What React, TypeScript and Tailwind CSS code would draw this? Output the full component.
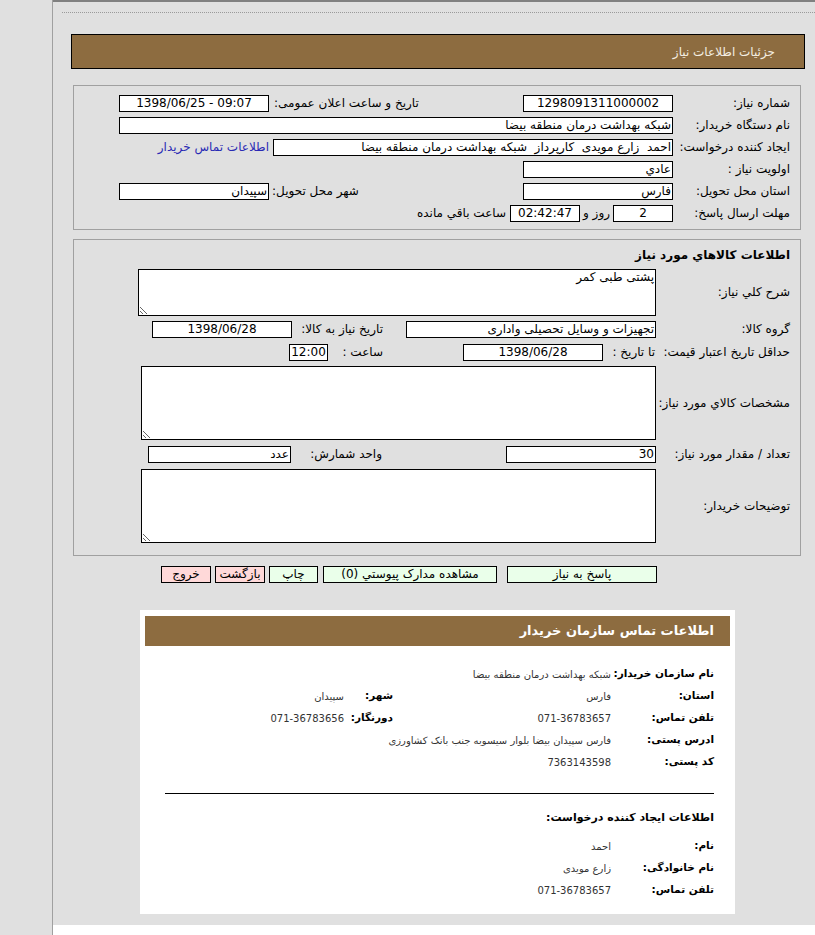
import React from "react";

const FONT = { fontFamily: '"DejaVu Sans", sans-serif' };

function Box({ className = "", children, ltr = false }: { className?: string; children?: React.ReactNode; ltr?: boolean }) {
  return (
    <div
      dir={ltr ? "ltr" : "rtl"}
      className={`h-[17px] shrink-0 border border-black bg-white px-[1px] text-[12px] leading-[15px] whitespace-nowrap overflow-hidden text-black ${className}`}
    >
      {children}
    </div>
  );
}

function Area({ className = "", value = "" }: { className?: string; value?: string }) {
  return (
    <textarea
      readOnly
      dir="rtl"
      value={value}
      className={`block shrink-0 resize border border-black bg-white px-[1px] py-0 text-[12px] leading-[15px] text-black outline-none ${className}`}
      style={FONT}
    />
  );
}

function Lbl({ className = "", children }: { className?: string; children?: React.ReactNode }) {
  return <div className={`shrink-0 whitespace-nowrap text-[12px] leading-[17px] text-black ${className}`}>{children}</div>;
}

function Btn({ className = "", children }: { className?: string; children?: React.ReactNode }) {
  return (
    <div className={`h-[17px] shrink-0 border border-black text-center text-[12px] leading-[15px] text-black ${className}`}>
      {children}
    </div>
  );
}

function CardRow({ children }: { children: React.ReactNode }) {
  return <div className="flex h-[22px] items-center whitespace-nowrap">{children}</div>;
}

function CL({ className = "w-[103px]", children }: { className?: string; children: React.ReactNode }) {
  return <div className={`shrink-0 text-[10.5px] font-bold text-black ${className}`}>{children}</div>;
}

export default function App() {
  return (
    <div className="flex min-h-[935px] w-[815px] bg-[#e0e0e0]" dir="ltr" style={FONT}>
      <div className="w-[52px] shrink-0 bg-[#e0e0e0]" />
      <div className="w-[1px] shrink-0 bg-[#a0a0a0]" />
      <div className="flex w-[762px] flex-col">
        <div className="h-[925px] border-t-2 border-[#808080] bg-[#e0e0e0]" dir="rtl">
          <div className="ml-[9px] mt-[10px] border-t border-dotted border-[#9a9a9a]" />
          {/* header */}
          <div className="ml-[18px] mr-[10px] mt-[21px] flex h-[35px] items-center border border-black bg-[#8d6c40] pr-[29px] text-[12px] text-[#f4eee2]">
            جزئیات اطلاعات نیاز
          </div>

          {/* panel 1 */}
          <div className="ml-[20px] mr-[14px] mt-[16px] border border-[#a0a0a0] pb-[2px] pt-[9px]">
            <div className="flex h-[22px] items-start">
              <Lbl className="w-[127px] pr-[10px]">شماره نیاز:</Lbl>
              <Box className="w-[150px] text-center">1298091311000002</Box>
              <div className="flex flex-1 justify-end pl-[45px]">
                <Lbl className="ml-[5px]">تاریخ و ساعت اعلان عمومی:</Lbl>
                <Box ltr className="w-[150px] text-center">1398/06/25 - 09:07</Box>
              </div>
            </div>
            <div className="flex h-[22px] items-start">
              <Lbl className="w-[127px] pr-[10px]">نام دستگاه خریدار:</Lbl>
              <Box className="w-[554px] text-right">شبکه بهداشت درمان منطقه بیضا</Box>
            </div>
            <div className="flex h-[22px] items-start">
              <Lbl className="w-[127px] pr-[10px]">ایجاد کننده درخواست:</Lbl>
              <Box className="w-[400px] text-right">احمد&nbsp; زارع مویدی&nbsp; کارپرداز&nbsp; شبکه بهداشت درمان منطقه بیضا</Box>
              <div className="mr-[4px] shrink-0 whitespace-nowrap text-[12px] leading-[17px] text-[#2a2ab4]">اطلاعات تماس خریدار</div>
            </div>
            <div className="flex h-[22px] items-start">
              <Lbl className="w-[127px] pr-[10px]">اولویت نیاز :</Lbl>
              <Box className="w-[150px] text-right">عادي</Box>
            </div>
            <div className="flex h-[22px] items-start">
              <Lbl className="w-[127px] pr-[10px]">استان محل تحویل:</Lbl>
              <Box className="w-[150px] text-right">فارس</Box>
              <div className="flex flex-1 justify-end pl-[45px]">
                <Lbl className="ml-[3px]">شهر محل تحویل:</Lbl>
                <Box className="w-[150px] text-right">سپیدان</Box>
              </div>
            </div>
            <div className="flex h-[22px] items-start">
              <Lbl className="w-[127px] pr-[10px]">مهلت ارسال پاسخ:</Lbl>
              <Box className="w-[60px] text-center">2</Box>
              <Lbl className="mx-[3px]">روز و</Lbl>
              <Box className="w-[70px] text-center">02:42:47</Box>
              <Lbl className="mr-[4px]">ساعت باقي مانده</Lbl>
            </div>
          </div>

          {/* panel 2 */}
          <div className="ml-[20px] mr-[14px] mt-[9px] border border-[#a0a0a0] pb-[12px] pt-[7px]">
            <div className="h-[17px] pr-[10px] text-[12px] font-bold leading-[17px] text-black">اطلاعات کالاهاي مورد نیاز</div>
            <div className="mt-[5px] flex items-center">
              <Lbl className="w-[144px] pr-[10px]">شرح کلي نیاز:</Lbl>
              <Area className="h-[47px] w-[518px]" value="پشتی طبی کمر" />
            </div>
            <div className="mt-[5px] flex items-start">
              <Lbl className="w-[144px] pr-[10px]">گروه کالا:</Lbl>
              <Box className="w-[250px] text-right">تجهیزات و وسایل تحصیلی واداری</Box>
              <Lbl className="mr-[23px] w-[91px]">تاریخ نیاز به کالا:</Lbl>
              <Box className="w-[140px] text-center">1398/06/28</Box>
            </div>
            <div className="mt-[6px] flex items-start">
              <Lbl className="w-[144px] pr-[10px]">حداقل تاریخ اعتبار قیمت:</Lbl>
              <Lbl className="w-[53px] pr-[1px]">تا تاریخ :</Lbl>
              <Box className="w-[140px] text-center">1398/06/28</Box>
              <Lbl className="mr-[80px] w-[55px]">ساعت :</Lbl>
              <Box className="w-[39px] text-center">12:00</Box>
            </div>
            <div className="mt-[5px] flex items-center">
              <Lbl className="w-[144px] pr-[10px]">مشخصات کالاي مورد نیاز:</Lbl>
              <Area className="h-[74px] w-[515px]" />
            </div>
            <div className="mt-[6px] flex items-start">
              <Lbl className="w-[144px] pr-[10px]">تعداد / مقدار مورد نیاز:</Lbl>
              <Box className="w-[150px] text-right">30</Box>
              <Lbl className="mr-[124px] w-[91px]">واحد شمارش:</Lbl>
              <Box className="w-[143px] text-right">عدد</Box>
            </div>
            <div className="mt-[6px] flex items-center">
              <Lbl className="w-[144px] pr-[10px]">توضیحات خریدار:</Lbl>
              <Area className="h-[74px] w-[515px]" />
            </div>
          </div>

          {/* buttons */}
          <div className="mr-[158px] mt-[10px] flex">
            <Btn className="w-[150px] bg-[#eaffea]">پاسخ به نیاز</Btn>
            <Btn className="mr-[10px] w-[174px] bg-[#eaffea]">مشاهده مدارک پیوستي (0)</Btn>
            <Btn className="mr-[5px] w-[49px] bg-[#eaffea]">چاپ</Btn>
            <Btn className="mr-[4px] w-[50px] bg-[#ffd9d9]">بازگشت</Btn>
            <Btn className="mr-[4px] w-[50px] bg-[#ffd9d9]">خروج</Btn>
          </div>

          {/* contact card */}
          <div className="mr-[80px] mt-[27px] h-[304px] w-[595px] bg-white pt-[6px]">
            <div className="mx-[5px] flex h-[30px] items-center bg-[#8d6c40] pr-[16px] text-[13px] font-bold text-white">
              اطلاعات تماس سازمان خریدار
            </div>
            <div className="mt-[17px] pr-[21px] text-[10px] text-[#333]">
              <CardRow>
                <CL>نام سازمان خریدار:</CL>
                <div>شبکه بهداشت درمان منطقه بیضا</div>
              </CardRow>
              <CardRow>
                <CL>استان:</CL>
                <div className="w-[218px] shrink-0">فارس</div>
                <CL className="w-[49px]">شهر:</CL>
                <div>سپیدان</div>
              </CardRow>
              <CardRow>
                <CL>تلفن تماس:</CL>
                <div className="w-[218px] shrink-0">071-36783657</div>
                <CL className="w-[49px]">دورنگار:</CL>
                <div>071-36783656</div>
              </CardRow>
              <CardRow>
                <CL>ادرس پستی:</CL>
                <div>فارس سپیدان بیضا بلوار سیسوبه جنب بانک کشاورزی</div>
              </CardRow>
              <CardRow>
                <CL>کد پستی:</CL>
                <div>7363143598</div>
              </CardRow>
              <div className="ml-[25px] mt-[20px] h-[1px] bg-black" />
              <div className="mt-[13px] flex h-[22px] items-center text-[11px] font-bold text-black">
                اطلاعات ایجاد کننده درخواست:
              </div>
              <div className="mt-[6px]">
                <CardRow>
                  <CL>نام:</CL>
                  <div>احمد</div>
                </CardRow>
                <CardRow>
                  <CL>نام خانوادگی:</CL>
                  <div>زارع مویدی</div>
                </CardRow>
                <CardRow>
                  <CL>تلفن تماس:</CL>
                  <div>071-36783657</div>
                </CardRow>
              </div>
            </div>
          </div>
        </div>
        <div className="flex-1 bg-white" />
      </div>
    </div>
  );
}
